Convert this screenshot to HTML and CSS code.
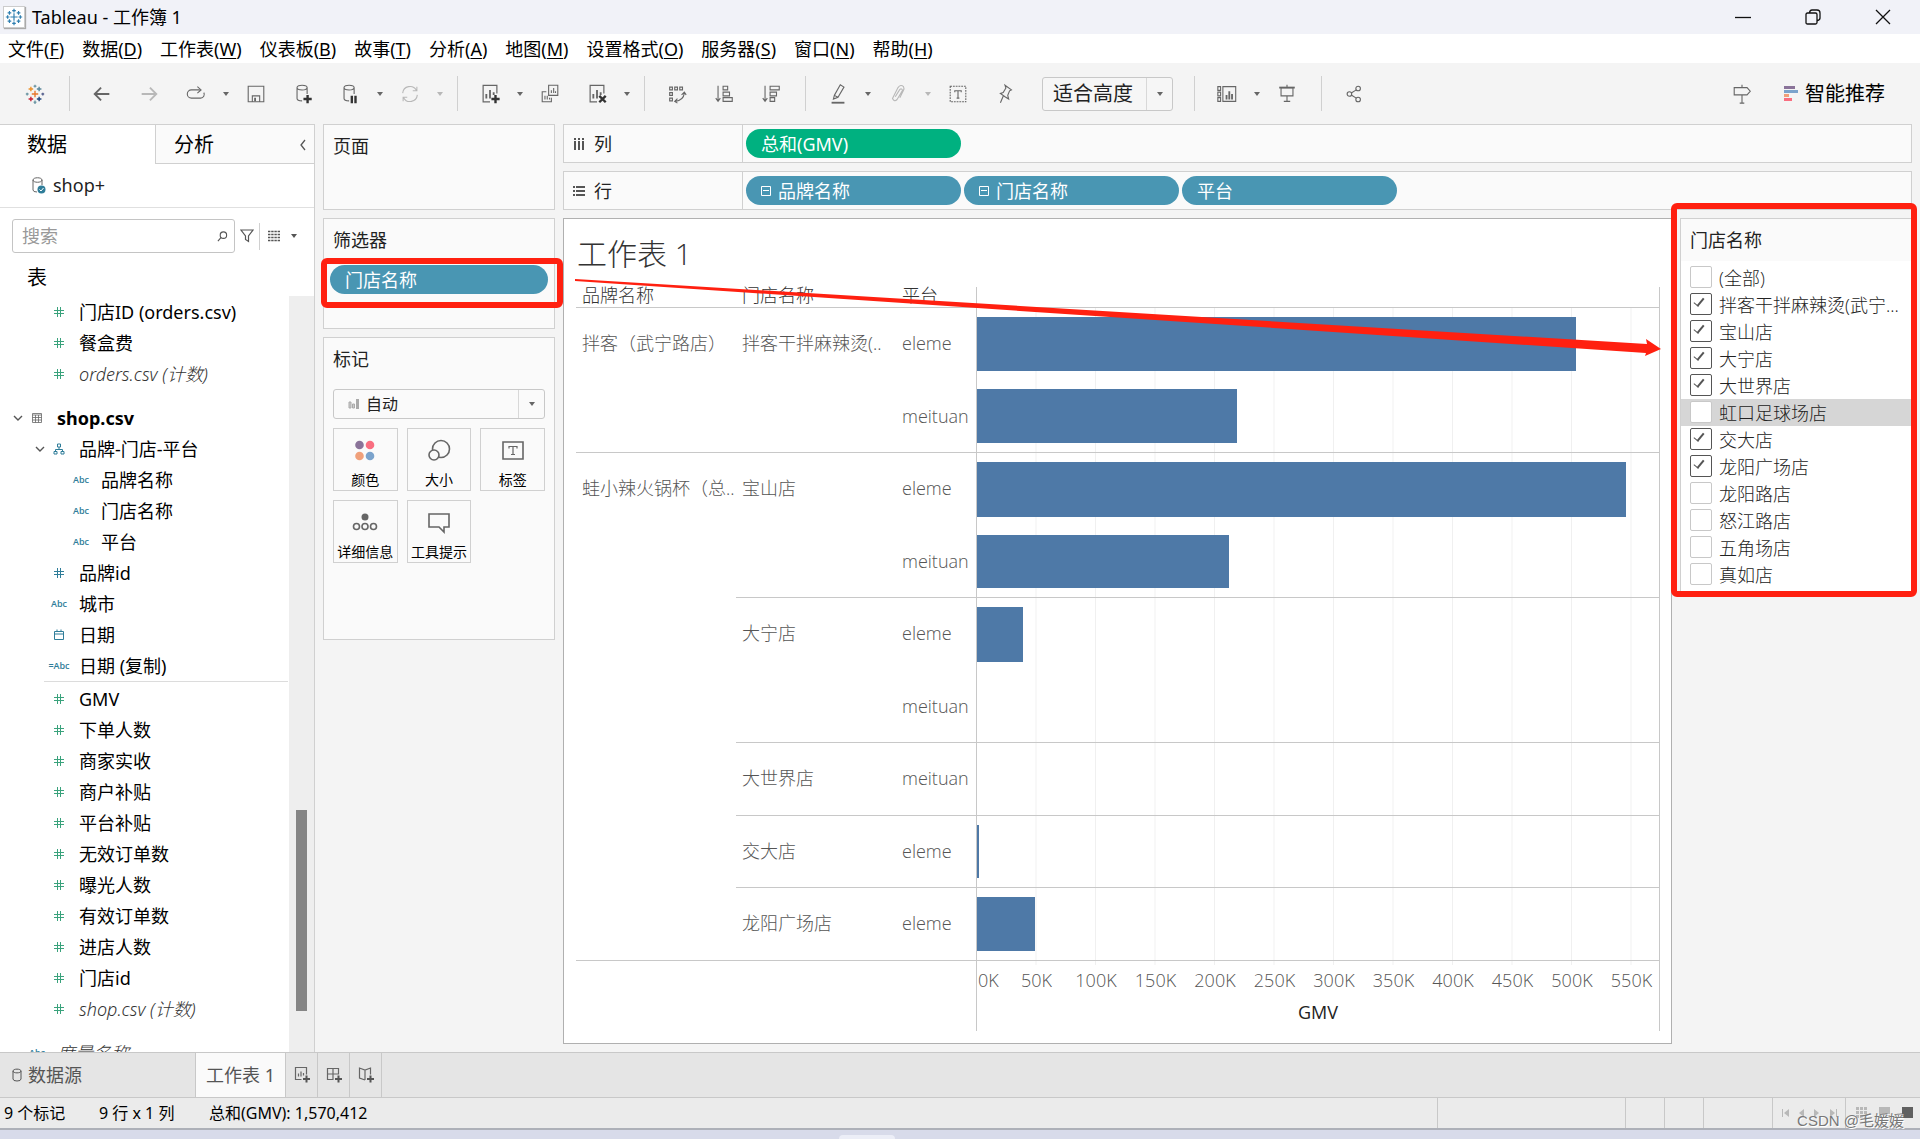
FILE: index.html
```html
<!DOCTYPE html>
<html lang="zh-CN">
<head>
<meta charset="utf-8">
<title>Tableau - 工作簿 1</title>
<link rel="stylesheet" href="styles.css">
</head>
<body>
<svg class="sprite" aria-hidden="true">
  <symbol id="hash" viewBox="0 0 12 12"><path d="M4.500 1v10M7.500 1v10M1 4.500h10M1 7.500h10" fill="none" stroke="currentColor" stroke-width="1"/></symbol>
  <symbol id="caret" viewBox="0 0 8 6"><path d="M1 1h6L4 5z" fill="currentColor"/></symbol>
  <symbol id="chev" viewBox="0 0 10 8"><path d="M1 2l4 4 4-4" fill="none" stroke="#555" stroke-width="1.4"/></symbol>
  <symbol id="sheet" viewBox="0 0 24 24"><path d="M12 20.500H4.500v-18h15v9" fill="none" stroke="currentColor" stroke-width="1.300"/><path d="M8 12v5M12 7.500v9.500M16 10v3" stroke="currentColor" stroke-width="2"/></symbol>
</svg>

<header class="titlebar">
  <svg class="appicon" viewBox="0 0 22 22"><g stroke="#2f7fb0" stroke-width="1.300"><path d="M11 7v8M7 11h8M11 2v4M9 4h4M11 16v4M9 18h4M4 9v4M2 11h4M18 9v4M16 11h4M6 4.500v4M4 6.500h4M16 4.500v4M14 6.500h4M6 13.500v4M4 15.500h4M16 13.500v4M14 15.500h4"/></g></svg>
  <h1>Tableau - 工作簿 1</h1>
  <div class="winctl">
    <button aria-label="最小化"><svg viewBox="0 0 16 16"><path d="M0 8.500h16" class="ln"/></svg></button>
    <button aria-label="还原"><svg viewBox="0 0 16 16"><path d="M1 5.500q0-1.500 1.500-1.500h8q1.500 0 1.500 1.500v8q0 1.500-1.500 1.500h-8Q1 15 1 13.500zM4.500 3.500Q5 1 7 1h5q3 0 3 3v5q0 2-2.500 2.500" class="ln"/></svg></button>
    <button aria-label="关闭"><svg viewBox="0 0 16 16"><path d="M1 1l14 14M15 1L1 15" class="ln"/></svg></button>
  </div>
</header>

<nav class="menubar">
  <button>文件(<u>F</u>)</button><button>数据(<u>D</u>)</button><button>工作表(<u>W</u>)</button><button>仪表板(<u>B</u>)</button><button>故事(<u>T</u>)</button><button>分析(<u>A</u>)</button><button>地图(<u>M</u>)</button><button>设置格式(<u>O</u>)</button><button>服务器(<u>S</u>)</button><button>窗口(<u>N</u>)</button><button>帮助(<u>H</u>)</button>
</nav>

<div class="toolbar">
  <button class="tool" aria-label="开始页"><svg viewBox="0 0 24 24" fill="none" stroke-width="1.500"><path d="M12 8.500v7M8.500 12h7" stroke="#e8762c"/><path d="M7.500 4v5M5 6.500h5" stroke="#eb912b"/><path d="M16.500 4v5M14 6.500h5" stroke="#59879b"/><path d="M7.500 15v5M5 17.500h5" stroke="#c72035"/><path d="M16.500 15v5M14 17.500h5" stroke="#1f457e"/><path d="M12 2v3M10.500 3.500h3M12 19v4M10.500 21h3M3.500 10.500v3M2 12h3" stroke="#7099a6"/><path d="M20.500 10.500v3M19 12h3" stroke="#5b6591"/></svg></button>
  <i class="sep"></i>
  <button class="tool" aria-label="撤消"><svg viewBox="0 0 24 24"><path d="M20 12H5M11 5l-7 7 7 7" class="ic2"/></svg></button>
  <button class="tool off" aria-label="重做"><svg viewBox="0 0 24 24"><path d="M4 12h15M13 5l7 7-7 7" class="ic2"/></svg></button>
  <button class="tool" aria-label="重播"><svg viewBox="0 0 24 24"><path d="M16 7.500H7a4 4 0 000 9h10a4 4 0 003.500-6M13.500 4l4 3.500-4 3.500" class="ic"/></svg></button>
  <button class="drop" aria-label="更多"><svg><use href="#caret"/></svg></button>
  <button class="tool" aria-label="保存"><svg viewBox="0 0 24 24"><path d="M3.500 3.500h17v17h-17zM8 20v-6h8v6" class="ic"/><path d="M10 16h2v4h-2z" fill="currentColor"/></svg></button>
  <button class="tool" aria-label="新建数据源"><svg viewBox="0 0 24 24"><path d="M5.500 5v12c0 2 3 2.500 5.500 2.500M16.500 5v7M5.500 5c0-3.500 11-3.500 11 0s-11 3.500-11 0" class="ic"/><path d="M17 13v9M12.500 17.500h9" class="bold"/></svg></button>
  <button class="tool" aria-label="暂停更新"><svg viewBox="0 0 24 24"><path d="M5.500 5v12c0 2 3 2.500 5.500 2.500M16.500 5v7M5.500 5c0-3.500 11-3.500 11 0s-11 3.500-11 0" class="ic"/><path d="M14 14v8M18 14v8" class="bold"/></svg></button>
  <button class="drop" aria-label="更多"><svg><use href="#caret"/></svg></button>
  <button class="tool off" aria-label="刷新"><svg viewBox="0 0 24 24"><path d="M4 11a8 8 0 0115-3M20 13a8 8 0 01-15 3M19.500 4v4.500h-4.500M4.500 20v-4.500h4.500" class="ic"/></svg></button>
  <button class="drop off" aria-label="更多"><svg><use href="#caret"/></svg></button>
  <i class="sep"></i>
  <button class="tool" aria-label="新建工作表"><svg viewBox="0 0 24 24"><use href="#sheet"/><path d="M18 13v9M13.500 17.500h9" class="bold"/></svg></button>
  <button class="drop" aria-label="更多"><svg><use href="#caret"/></svg></button>
  <button class="tool" aria-label="复制"><svg viewBox="0 0 24 24"><path d="M10.500 2.500h10v11h-10zM8 9.500H3.500v11h10V16M13.500 11V8M16 11V5.500M18 11V9M6.500 18v-4M9 18v-4M11.500 18v-2" class="ic"/></svg></button>
  <button class="tool" aria-label="清除工作表"><svg viewBox="0 0 24 24"><use href="#sheet"/><path d="M14.500 14l7 7M21.500 14l-7 7" class="bold"/></svg></button>
  <button class="drop" aria-label="更多"><svg><use href="#caret"/></svg></button>
  <i class="sep"></i>
  <button class="tool" aria-label="交换行和列"><svg viewBox="0 0 24 24"><path d="M4 4.500h3v3H4zM9.500 4.500h3v3h-3zM15 4.500h3v3h-3zM4 10.500h3v3H4zM4 16.500h3v3H4zM10 20q9-1 10-9M17 13l3-3 2 3M12.500 17L9.500 20l3 2" class="ic"/></svg></button>
  <button class="tool" aria-label="升序排序"><svg viewBox="0 0 24 24"><path d="M5.500 3v17M3 16.500l2.500 3.500L8 16.500M11 3.500h5v4h-5zM11 10h7v4h-7zM11 16h10v4H11z" class="ic"/></svg></button>
  <button class="tool" aria-label="降序排序"><svg viewBox="0 0 24 24"><path d="M5.500 3v17M3 16.500l2.500 3.500L8 16.500M11 3.500h10v4H11zM11 10h7v4h-7zM11 16h5v4h-5z" class="ic"/></svg></button>
  <i class="sep"></i>
  <button class="tool" aria-label="突出显示"><svg viewBox="0 0 24 24"><path d="M8 13.500l6.500-11.500 4 2.500-6.500 11-5 2zM8 13.500l4 2" class="ic"/><path d="M5 21.500h14" class="ic2"/></svg></button>
  <button class="drop" aria-label="更多"><svg><use href="#caret"/></svg></button>
  <button class="tool off" aria-label="组成员"><svg viewBox="0 0 24 24"><path d="M9 15l5-8q2-1.500 3 1l-6 10q-3 3-5-1l6-12q3-4 6-1 1 2 0 4l-4 8" class="ic"/></svg></button>
  <button class="drop off" aria-label="更多"><svg><use href="#caret"/></svg></button>
  <button class="tool" aria-label="显示标记标签"><svg viewBox="0 0 24 24"><path d="M3.500 3.500h17v17h-17z" class="ic" stroke-dasharray="2 1"/><path d="M8.500 10V8.500h7V10M12 8.500v8M10.500 16.500h3" class="ic"/></svg></button>
  <button class="tool" aria-label="固定轴"><svg viewBox="0 0 24 24"><path d="M12 2.500l7 5-2 1-2 5 1 4-4-2.500-5-3.500 3-1 3-5zM10 14.500l-3 7" class="ic"/></svg></button>
  <div class="picker fit">
    <select aria-label="适合"><option>适合高度</option></select><span class="arrow"><svg><use href="#caret"/></svg></span>
  </div>
  <i class="sep wide"></i>
  <button class="tool" aria-label="显示/隐藏卡"><svg viewBox="0 0 24 24"><path d="M7.500 4h14v16h-14zM2 4h3v4H2zM2 10h3v4H2zM2 16h3v4H2z" class="ic"/><path d="M11.500 18v-5M14.500 18V9M17.500 18v-6" class="ic2"/></svg></button>
  <button class="drop" aria-label="更多"><svg><use href="#caret"/></svg></button>
  <button class="tool" aria-label="演示模式"><svg viewBox="0 0 24 24"><path d="M5.500 5h13v9h-13zM12 2v3M12 14v6M8.500 20h7" class="ic"/><path d="M3.500 5h17" class="ic2"/></svg></button>
  <i class="sep"></i>
  <button class="tool" aria-label="共享"><svg viewBox="0 0 24 24"><circle cx="7" cy="12" r="2.500" class="ic"/><circle cx="16.500" cy="6" r="2.500" class="ic"/><circle cx="16.500" cy="18" r="2.500" class="ic"/><path d="M9 11l5.500-3.500M9 13l5.500 3.500" class="ic"/></svg></button>
  <button class="tool right" aria-label="数据指南"><svg viewBox="0 0 24 24"><path d="M3.500 5h14l3.500 4-3.500 4h-14zM12 2v3M12 13v9M9.500 22h5" class="ic"/></svg></button>
  <button class="showme"><svg viewBox="0 0 16 16"><path d="M1 0h11v3H1z" fill="#8a7399"/><path d="M1 4h14v3H1z" fill="#7ba3cc"/><path d="M1 8h5v3H1z" fill="#f0a07a"/><path d="M1 12h8v3H1z" fill="#f96e80"/></svg>智能推荐</button>
</div>

<main class="workspace">
  <aside class="datapane">
    <div class="tabs"><button class="tab on">数据</button><button class="tab">分析<svg viewBox="0 0 8 12"><path d="M6 1L2 6l4 5" fill="none" stroke="#555" stroke-width="1.300"/></svg></button></div>
    <div class="source"><svg viewBox="0 0 16 18"><path d="M2 4v10q0 2 4 2M11 4v5M2 4c0-3 9-3 9 0s-9 3-9 0" fill="none" stroke="#666"/><circle cx="10.500" cy="13.500" r="4" fill="#2f7d99"/><path d="M8.500 13.500l1.500 1.500 2.500-3" fill="none" stroke="#fff"/></svg>shop+</div>
    <div class="searchrow">
      <label class="search"><input type="text" placeholder="搜索" aria-label="搜索"><svg viewBox="0 0 12 12"><circle cx="7" cy="4.500" r="3.500"/><path d="M4.500 7L1 11"/></svg></label>
      <button aria-label="筛选"><svg viewBox="0 0 14 14"><path d="M1 1h12L8.500 7v5.500l-3-2V7z"/></svg></button>
      <button class="view" aria-label="视图选项"><svg viewBox="0 0 14 12"><path d="M1 1.500h12M1 4.500h12M1 7.500h12M1 10.500h12" stroke-width="1.300" stroke-dasharray="2.400 .8"/></svg><svg class="car"><use href="#caret"/></svg></button>
    </div>
    <h2>表</h2>
    <div class="treebox">
      <ul class="tree">
        <li class="l1"><i></i><b class="m"><svg><use href="#hash"/></svg></b>门店ID (orders.csv)</li>
        <li class="l1"><i></i><b class="m"><svg><use href="#hash"/></svg></b>餐盒费</li>
        <li class="l1"><i></i><b class="m"><svg><use href="#hash"/></svg></b><em>orders.csv (计数)</em></li>
        <li class="l0"><i><svg><use href="#chev"/></svg></i><b><svg viewBox="0 0 12 12"><path d="M1.500 1.500h9v9h-9zM1.500 3h9M1.500 5.500h9M1.500 8h9M4.500 3v7.500M7.500 3v7.500" fill="none" stroke="#666" stroke-width=".8"/></svg></b><strong>shop.csv</strong></li>
        <li class="l1"><i><svg><use href="#chev"/></svg></i><b><svg viewBox="0 0 12 12"><path d="M4.500 1h3v3h-3zM1 8.500h3v2.500H1zM8 8.500h3V11H8zM6 4v2.500M2.500 8.500v-2h7v2" fill="none" stroke="currentColor"/></svg></b>品牌-门店-平台</li>
        <li class="l2"><i></i><b>Abc</b>品牌名称</li>
        <li class="l2"><i></i><b>Abc</b>门店名称</li>
        <li class="l2"><i></i><b>Abc</b>平台</li>
        <li class="l1"><i></i><b><svg><use href="#hash"/></svg></b>品牌id</li>
        <li class="l1"><i></i><b>Abc</b>城市</li>
        <li class="l1"><i></i><b><svg viewBox="0 0 12 12"><path d="M1.500 2.500h9v8h-9zM1.500 5h9M4 .5v2M8 .5v2" fill="none" stroke="currentColor"/></svg></b>日期</li>
        <li class="l1"><i></i><b>=Abc</b>日期 (复制)</li>
        <li class="rule"></li>
        <li class="l1"><i></i><b class="m"><svg><use href="#hash"/></svg></b>GMV</li>
        <li class="l1"><i></i><b class="m"><svg><use href="#hash"/></svg></b>下单人数</li>
        <li class="l1"><i></i><b class="m"><svg><use href="#hash"/></svg></b>商家实收</li>
        <li class="l1"><i></i><b class="m"><svg><use href="#hash"/></svg></b>商户补贴</li>
        <li class="l1"><i></i><b class="m"><svg><use href="#hash"/></svg></b>平台补贴</li>
        <li class="l1"><i></i><b class="m"><svg><use href="#hash"/></svg></b>无效订单数</li>
        <li class="l1"><i></i><b class="m"><svg><use href="#hash"/></svg></b>曝光人数</li>
        <li class="l1"><i></i><b class="m"><svg><use href="#hash"/></svg></b>有效订单数</li>
        <li class="l1"><i></i><b class="m"><svg><use href="#hash"/></svg></b>进店人数</li>
        <li class="l1"><i></i><b class="m"><svg><use href="#hash"/></svg></b>门店id</li>
        <li class="l1"><i></i><b class="m"><svg><use href="#hash"/></svg></b><em>shop.csv (计数)</em></li>
        <li class="l0"><i></i><b>Abc</b><em>度量名称</em></li>
      </ul>
      <div class="scroll"><span></span></div>
    </div>
  </aside>

  <section class="cards">
    <div class="card pages"><h3>页面</h3></div>
    <div class="card filters"><h3>筛选器</h3><button class="pill">门店名称</button><span class="mark-box"></span></div>
    <div class="card marks">
      <h3>标记</h3>
      <div class="picker"><svg class="auto" viewBox="0 0 12 12"><path d="M1 4h2v6H1zM4.500 6h2v4h-2z" fill="#ccc" stroke="#aaa"/><path d="M8 1h3v10H8z" fill="#aaa"/></svg><select aria-label="标记类型"><option>自动</option></select><span class="arrow"><svg><use href="#caret"/></svg></span></div>
      <div class="markgrid">
        <button><svg viewBox="0 0 26 24"><circle cx="7.500" cy="6" r="4.300" fill="#8a7399"/><circle cx="18" cy="6" r="4.300" fill="#f96e80"/><circle cx="7.500" cy="17" r="4.300" fill="#f0a07a"/><circle cx="18" cy="17" r="4.300" fill="#7ba3cc"/></svg>颜色</button>
        <button><svg viewBox="0 0 26 24"><circle cx="15" cy="10" r="8.500" class="ic3"/><circle cx="8" cy="16" r="5" fill="#fafafa" stroke="#666" stroke-width="1.600"/></svg>大小</button>
        <button><svg viewBox="0 0 26 24"><path d="M3 3h20v17H3z" class="ic3"/><path d="M9 9.500V7.500h8v2M13 7.500v8M11 15.500h4" class="ic"/></svg>标签</button>
        <button><svg viewBox="0 0 26 24"><circle cx="13" cy="6" r="3.500" fill="#666"/><circle cx="4.500" cy="15.500" r="3" class="ic3"/><circle cx="13" cy="15.500" r="3" class="ic3"/><circle cx="21.500" cy="15.500" r="3" class="ic3"/></svg>详细信息</button>
        <button><svg viewBox="0 0 26 24"><path d="M3 3h20v13h-5v5l-5-5H3z" class="ic3"/></svg>工具提示</button>
      </div>
    </div>
  </section>

  <section class="canvas">
    <div class="shelf"><span class="name"><svg viewBox="0 0 12 12"><path d="M2 0v2M6 0v2M10 0v2M2 3v9M6 3v9M10 3v9" stroke="#555" stroke-width="2"/></svg>列</span><button class="pill green">总和(GMV)</button></div>
    <div class="shelf"><span class="name"><svg viewBox="0 0 12 12"><path d="M0 2h2M0 6h2M0 10h2M3 2h9M3 6h9M3 10h9" stroke="#555" stroke-width="2"/></svg>行</span><button class="pill"><svg viewBox="0 0 10 10"><path d="M.5.5h9v9h-9zM2 4.500h6" fill="none" stroke="#fff"/></svg>品牌名称</button><button class="pill"><svg viewBox="0 0 10 10"><path d="M.5.5h9v9h-9zM2 4.500h6" fill="none" stroke="#fff"/></svg>门店名称</button><button class="pill">平台</button></div>
    <div class="split">
      <div class="viz">
        <h2>工作表 1</h2>
        <table class="chart">
          <thead><tr><th>品牌名称</th><th>门店名称</th><th>平台</th><th class="plot"></th></tr></thead>
          <tbody>
            <tr><th class="brand2">拌客（武宁路店）</th><th class="shop2">拌客干拌麻辣烫(..</th><td>eleme</td><td class="plot"><span class="bar" style="width:87.9%"></span></td></tr>
            <tr class="end"><td>meituan</td><td class="plot"><span class="bar" style="width:38.1%"></span></td></tr>
            <tr><th class="brand7">蛙小辣火锅杯（总..</th><th class="shop2">宝山店</th><td>eleme</td><td class="plot"><span class="bar" style="width:95.1%"></span></td></tr>
            <tr class="end"><td>meituan</td><td class="plot"><span class="bar" style="width:37%"></span></td></tr>
            <tr><th class="shop2">大宁店</th><td>eleme</td><td class="plot"><span class="bar" style="width:6.8%"></span></td></tr>
            <tr class="end"><td>meituan</td><td class="plot"></td></tr>
            <tr class="end"><th>大世界店</th><td>meituan</td><td class="plot"></td></tr>
            <tr class="end"><th>交大店</th><td>eleme</td><td class="plot"><span class="bar" style="width:.3%"></span></td></tr>
            <tr class="end"><th>龙阳广场店</th><td>eleme</td><td class="plot"><span class="bar" style="width:8.5%"></span></td></tr>
          </tbody>
          <tfoot><tr><td class="axis"><div class="ticks"></div><div class="labels"><span>0K</span><span>50K</span><span>100K</span><span>150K</span><span>200K</span><span>250K</span><span>300K</span><span>350K</span><span>400K</span><span>450K</span><span>500K</span><span>550K</span></div><div class="axisname">GMV</div></td></tr></tfoot>
        </table>
        <svg class="pointer" viewBox="0 0 1086 80" preserveAspectRatio="none"><path d="M0 1L1072 66l-1-5 15 10-16 7 1-3L0 3z" fill="#ff2010"/></svg>
      </div>
      <fieldset class="quick">
        <legend>门店名称</legend>
        <label><input type="checkbox">(全部)</label>
        <label><input type="checkbox" checked>拌客干拌麻辣烫(武宁...</label>
        <label><input type="checkbox" checked>宝山店</label>
        <label><input type="checkbox" checked>大宁店</label>
        <label><input type="checkbox" checked>大世界店</label>
        <label class="hover"><input type="checkbox">虹口足球场店</label>
        <label><input type="checkbox" checked>交大店</label>
        <label><input type="checkbox" checked>龙阳广场店</label>
        <label><input type="checkbox">龙阳路店</label>
        <label><input type="checkbox">怒江路店</label>
        <label><input type="checkbox">五角场店</label>
        <label><input type="checkbox">真如店</label>
        <span class="mark-box"></span>
      </fieldset>
    </div>
  </section>
</main>

<div class="sheettabs">
  <button class="src"><svg viewBox="0 0 10 14"><path d="M1 3v8q0 2 4 2t4-2V3M1 3c0-2.500 8-2.500 8 0s-8 2.500-8 0" fill="none" stroke="#555"/></svg>数据源</button>
  <button class="cur">工作表 1</button>
  <button class="add" aria-label="新建工作表"><svg viewBox="0 0 18 18"><path d="M8.500 13.500h-6v-12h11v7M5.500 10.500v-3M8 10.500v-5M10.500 9.500V7" class="ic"/><path d="M13.500 9.500v7M10 13h7" class="add-mark"/></svg></button>
  <button class="add" aria-label="新建仪表板"><svg viewBox="0 0 18 18"><path d="M8.500 13.500h-6v-11h11v6M2.500 8h11M8 2.500v11" class="ic"/><path d="M13.500 9.500v7M10 13h7" class="add-mark"/></svg></button>
  <button class="add" aria-label="新建故事"><svg viewBox="0 0 18 18"><path d="M8 14l-5.500-2v-10L8 4l5.500-2v6.500M8 4v10" class="ic"/><path d="M13.500 9.500v7M10 13h7" class="add-mark"/></svg></button>
</div>

<footer class="status">
  <span class="s1">9 个标记</span><span class="s2">9 行 x 1 列</span><span>总和(GMV): 1,570,412</span>
  <div class="cells"><i class="c1"></i><i class="c2"></i><i class="c2"></i><i class="c3"></i>
    <div class="nav"><svg viewBox="0 0 8 8"><path d="M0 0h1v8H0zM7 0v8L2 4z"/></svg><svg viewBox="0 0 8 8"><path d="M6 0v8L1 4z"/></svg><svg viewBox="0 0 8 8"><path d="M1 0v8l5-4z"/></svg><svg viewBox="0 0 8 8"><path d="M7 0h1v8H7zM1 0v8l5-4z"/></svg></div>
    <div class="modes"><svg viewBox="0 0 11 11"><path d="M0 0h3v3H0zM4 0h3v3H4zM8 0h3v3H8zM0 4h3v3H0zM4 4h3v3H4zM8 4h3v3H8zM0 8h3v3H0zM4 8h3v3H4zM8 8h3v3H8z"/></svg><svg viewBox="0 0 11 11"><path d="M0 0h11v7H0zM0 8h3v3H0zM4 8h3v3H4zM8 8h3v3H8z"/></svg><svg viewBox="0 0 11 11" class="dark"><path d="M0 0h11v11H0z"/></svg></div>
  </div>
  <span class="credit">CSDN @毛媛媛</span>
</footer>
<div class="desktop"><span></span></div>
</body>
</html>
```
FILE: styles.css
```css
* { box-sizing: border-box; }
body {
  margin: 0; height: 100vh; display: flex; flex-direction: column; overflow: hidden;
  font: 18px/26px "Noto Sans", "Noto Sans CJK SC", sans-serif; color: #000; background: #f4f4f4;
}
button, select, input { font: inherit; color: inherit; margin: 0; padding: 0; border: 0; background: none; }
h1, h2, h3, ul { margin: 0; padding: 0; font-weight: 400; list-style: none; }
svg { display: block; flex: none; }
.sprite { width: 0; height: 0; position: absolute; }
.ic { fill: none; stroke: currentColor; stroke-width: 1.2; }
.ic2 { fill: none; stroke: currentColor; stroke-width: 2; }
.ic3 { fill: none; stroke: currentColor; stroke-width: 1.6; }
.bold { fill: none; stroke: #333; stroke-width: 2.6; }
.ln { fill: none; stroke: #111; stroke-width: 1.3; }

.titlebar { height: 34px; flex: none; display: flex; align-items: center; background: #f1f2f8; padding: 0 2px 0 3px; }
.titlebar h1 { font-size: 18px; line-height: 26px; margin-left: 7px; flex: 1; }
.appicon { width: 22px; height: 22px; background: #fff; border: 1px solid #ccc; box-shadow: 1px 1px 1px #aaa; }
.winctl { display: flex; }
.winctl button { width: 70px; height: 34px; display: grid; place-items: center; }
.winctl svg { width: 16px; height: 16px; }

.menubar { height: 29px; flex: none; display: flex; align-items: center; gap: 18px; padding: 0 8px; background: #fff; }
.menubar button { white-space: nowrap; }
.menubar u { text-underline-offset: 2px; text-decoration-thickness: 1px; }

.toolbar { height: 61px; flex: none; display: flex; align-items: center; padding: 0 35px 0 11px; color: #666; }
.tool { width: 47px; height: 36px; display: grid; place-items: center; flex: none; }
.tool svg { width: 22px; height: 22px; }
.drop { width: 13px; height: 36px; display: grid; place-items: center; flex: none; }
.drop svg, .arrow svg { width: 8px; height: 6px; color: #666; }
.off, .off svg { color: #b8b8b8; }
.sep { width: 1px; height: 35px; background: #d0d0d0; margin: 0 8px 0 11px; flex: none; }
.sep.wide { margin-left: 21px; }
.picker { display: flex; align-items: stretch; border: 1px solid #c8c8c8; border-radius: 3px; color: #222; background: #fafafa; }
.picker select { appearance: none; flex: 1; min-width: 0; outline: 0; }
.arrow { width: 26px; display: grid; place-items: center; border-left: 1px solid #d8d8d8; pointer-events: none; }
.fit { width: 131px; height: 34px; margin-left: 14px; font-size: 20px; flex: none; background: #f6f6f6; }
.fit select { padding-left: 10px; }
.right { margin-left: auto; }
.showme { display: flex; align-items: center; gap: 6px; margin-left: 18px; font-size: 20px; color: #000; white-space: nowrap; }
.showme svg { width: 16px; height: 16px; }

.workspace { flex: 1; min-height: 0; display: flex; align-items: stretch; padding-right: 8px; }
.datapane { width: 315px; flex: none; display: flex; flex-direction: column; background: #fff; border-top: 1px solid #d0d0d0; border-right: 1px solid #d0d0d0; }
.tabs { display: flex; font-size: 20px; }
.tab { height: 39px; width: 159px; text-align: left; padding: 1px 7px 0 18px; display: flex; align-items: center; justify-content: space-between; background: #fafafa; border: solid #d0d0d0; border-width: 0 0 1px 1px; }
.tab.on { width: 155px; background: #fff; border: 0; padding-left: 27px; }
.tab svg { width: 8px; height: 12px; }
.source { display: flex; align-items: center; height: 44px; padding: 0 0 2px 31px; gap: 6px; border-bottom: 1px solid #e0e0e0; color: #222; }
.source svg { width: 16px; height: 18px; }
.searchrow { display: flex; align-items: center; padding: 11px 12px 0; gap: 5px; }
.search { display: flex; align-items: center; width: 223px; height: 34px; border: 1px solid #c4c4c4; border-radius: 3px; padding: 0 6px 0 9px; }
.search input { flex: 1; min-width: 0; outline: 0; }
.search input::placeholder { color: #999; opacity: 1; }
.searchrow svg { width: 14px; height: 14px; fill: none; stroke: #555; stroke-width: 1.2; }
.search svg { width: 11px; height: 11px; }
.view { display: flex; align-items: center; gap: 9px; height: 27px; border-left: 1px solid #d0d0d0; padding-left: 7px; }
.searchrow .car { width: 8px; height: 6px; stroke: none; color: #555; }
.datapane h2 { font-size: 20px; line-height: 26px; padding: 12px 27px 5px; }
.treebox { flex: 1; min-height: 0; display: flex; }
.tree { flex: 1; overflow: hidden; }
.tree li { height: 31px; display: flex; align-items: center; white-space: nowrap; }
.tree .l0 { padding-left: 12px; margin-top: 13px; }
.tree .l1 { padding-left: 34px; }
.tree .l2 { padding-left: 56px; }
.tree .rule { height: 1px; margin: 0 1px 1px 44px; background: #dcdcdc; }
.tree i { width: 14px; flex: none; }
.tree i svg { width: 10px; height: 8px; margin-left: 1px; }
.tree b { width: 22px; margin-right: 9px; flex: none; display: flex; justify-content: center; font: 600 9px/12px "Open Sans", sans-serif; color: #2f7d99; }
.tree b svg { width: 12px; height: 12px; }
.tree b.m { color: #3aa27c; }
.tree strong { font-weight: 700; }
.tree em { color: #333; font-weight: 300; }
.scroll { width: 25px; background: #eee; display: flex; flex-direction: column; align-items: center; }
.scroll::before { content: ""; flex: 513; }
.scroll::after { content: ""; flex: 41; }
.scroll span { flex: 201; width: 11px; background: #858585; }

.cards { width: 232px; margin: 0 8px; flex: none; display: flex; flex-direction: column; gap: 8px; }
.card { background: #fafafa; border: 1px solid #d0d0d0; padding: 8px 9px 0; position: relative; color: #222; }
.card h3 { font-size: 18px; line-height: 26px; }
.pages { height: 86px; }
.filters { height: 111px; padding: 8px 6px 0; }
.filters h3 { padding: 0 3px 12px; }
.filters .pill { width: 100%; }
.marks { height: 303px; }
.marks .picker { height: 30px; margin-top: 17px; font-size: 16px; align-items: stretch; }
.auto { width: 12px; height: 12px; margin: 8px 6px 0 14px; }
.markgrid { display: grid; grid-template-columns: repeat(3, 1fr); gap: 9px; margin-top: 9px; }
.markgrid button { height: 63px; border: 1px solid #d0d0d0; font-size: 14px; line-height: 20px; color: #000; display: flex; flex-direction: column; align-items: center; gap: 7px; padding-top: 10px; white-space: nowrap; }
.markgrid svg { width: 26px; height: 24px; color: #666; }
.mark-box { position: absolute; border: 6px solid #ff2010; border-radius: 6px; pointer-events: none; }
.filters .mark-box { inset: 39px -9px 20px -3px; }

.pill { height: 29px; border-radius: 15px; background: #4996b3; color: #fff; display: flex; align-items: center; gap: 7px; padding: 0 15px; white-space: nowrap; }
.pill.green { background: #00b180; }
.pill svg { width: 10px; height: 10px; }
.canvas { flex: 1; min-width: 0; display: flex; flex-direction: column; gap: 8px; padding-bottom: 8px; }
.shelf { height: 39px; flex: none; display: flex; align-items: center; gap: 3px; background: #fafafa; border: 1px solid #d0d0d0; }
.shelf .pill { width: 215px; }
.name { width: 179px; align-self: stretch; display: flex; align-items: center; gap: 9px; padding-left: 9px; border-right: 1px solid #d0d0d0; color: #222; }
.name svg { width: 12px; height: 12px; }
.split { flex: 1; min-height: 0; display: flex; gap: 8px; align-items: flex-start; }
.viz { flex: 1; min-width: 0; align-self: stretch; position: relative; background: #fff; border: 1px solid #b0b0b0; padding: 15px 11px 12px 12px; display: flex; flex-direction: column; font-weight: 300; font-family: "Open Sans", "Noto Sans CJK SC", sans-serif; }
.viz h2 { font-size: 30px; line-height: 40px; padding-left: 1px; margin-bottom: 13px; color: #333; font-weight: 300; }
.chart { flex: 1; min-height: 0; display: grid; grid-template-columns: 160px 160px 80px 1fr; grid-template-rows: 21px repeat(9, minmax(0, 1fr)) 70px; color: #555; }
.chart thead, .chart tbody, .chart tfoot, .chart tr { display: contents; }
.chart th, .chart td { padding: 0 0 0 6px; text-align: left; font-weight: 300; line-height: 71px; white-space: nowrap; min-width: 0; min-height: 0; }
.chart tbody th:first-child { grid-column: 2; }
.chart tbody th.brand2, .chart tbody th.brand7 { grid-column: 1; }
.chart .brand2 { grid-row: span 2; border-bottom: 1px solid #c8c8c8; }
.chart .brand7 { grid-row: span 7; border-bottom: 1px solid #c8c8c8; }
.chart .shop2 { grid-row: span 2; border-bottom: 1px solid #c8c8c8; }
.chart tbody td:not(.plot) { grid-column: 3; }
.chart tbody .end > * { border-bottom: 1px solid #c8c8c8; }
.chart thead th { line-height: 16px; border-bottom: 1px solid #c8c8c8; color: #333; }
.chart .plot { grid-column: 4; padding: 0; display: flex; align-items: center; border-left: 1px solid #c8c8c8; border-right: 1px solid #c8c8c8; }
.chart tbody .plot, .ticks { background-image: linear-gradient(to right, transparent calc(100% - 1px), #f0f0f0 0); background-size: 8.726% 100%; }
.bar { height: 75%; background: #4e79a7; }
.chart .axis { grid-column: 4; padding: 0; border-left: 1px solid #c8c8c8; border-right: 1px solid #c8c8c8; }
.ticks { height: 4px; }
.labels { display: flex; line-height: 30px; }
.labels span { flex: 0 0 8.726%; text-align: center; }
.labels span:first-child { flex-basis: 4.363%; text-align: left; padding-left: 1px; }
.axisname { text-align: center; line-height: 34px; color: #222; font-weight: 500; }
.pointer { position: absolute; left: 11px; top: 59px; width: calc(100% - 21px); height: 80px; }

.quick { width: 232px; flex: none; margin: 0; padding: 0 0 3px; border: 1px solid #d0d0d0; border-width: 1px 0 0 1px; background: #fff; position: relative; min-width: 0; font-family: "Open Sans", "Noto Sans CJK SC", sans-serif; font-weight: 300; color: #222; }
.quick legend { float: left; width: 100%; height: 42px; line-height: 43px; padding: 0 0 0 9px; margin-bottom: 3px; background: #fafafa; font-weight: 400; color: #222; }
.quick label { clear: both; display: flex; align-items: center; gap: 7px; height: 27px; padding-left: 9px; white-space: nowrap; }
.quick .hover { background: #d6d6d6; }
.quick input { appearance: none; width: 22px; height: 22px; flex: none; border: 1px solid #c8c8c8; border-radius: 2px; background: #fff; margin-bottom: 1px; }
.quick input:checked { border-color: #555; }
.quick input:checked::before { content: ""; display: block; width: 4px; height: 9px; margin: 2px 0 0 5px; border: solid #555; border-width: 0 2px 1px 0; transform: rotate(40deg); }
.quick .mark-box { inset: -16px -5px -6px -10px; }

.sheettabs { height: 46px; flex: none; display: flex; background: #e5e5e5; border: solid #c8c8c8; border-width: 1px 0; color: #555; }
.sheettabs button { border-right: 1px solid #c8c8c8; display: flex; align-items: center; white-space: nowrap; }
.sheettabs .src { width: 196px; padding-left: 12px; gap: 6px; }
.src svg { width: 10px; height: 14px; }
.sheettabs .cur { width: 90px; justify-content: center; background: #fafafa; }
.sheettabs .add { width: 32px; justify-content: center; }
.add svg { width: 18px; height: 18px; color: #666; }
.add-mark { fill: none; stroke: #555; stroke-width: 2; }

.status { height: 32px; flex: none; display: flex; align-items: center; padding-left: 4px; font-size: 16px; background: #ebebeb; border-bottom: 2px solid #adb0b8; position: relative; }
.s1 { width: 95px; }
.s2 { width: 110px; }
.cells { margin-left: auto; align-self: stretch; display: flex; }
.cells > * { border-left: 1px solid #c8c8c8; }
.c1 { width: 188px; }
.c2 { width: 39px; }
.c3 { width: 69px; }
.nav, .modes { display: flex; justify-content: space-between; padding: 11px 8px 0 9px; width: 73px; fill: #b8b8b8; }
.nav svg { width: 8px; height: 8px; }
.modes { width: 75px; padding: 9px 7px 0 10px; }
.modes svg { width: 11px; height: 11px; }
.modes .dark { fill: #606060; }
.credit { position: absolute; right: 16px; bottom: -3px; font: 15px/20px "Liberation Sans", "Noto Sans CJK SC", sans-serif; color: #777; text-shadow: 1px 1px 0 #fff; }
.desktop { height: 9px; flex: none; background: #d8dbea; display: flex; align-items: flex-end; padding-left: 839px; }
.desktop span { width: 56px; height: 4px; background: #eceef7; border-radius: 4px 4px 0 0; }
```
